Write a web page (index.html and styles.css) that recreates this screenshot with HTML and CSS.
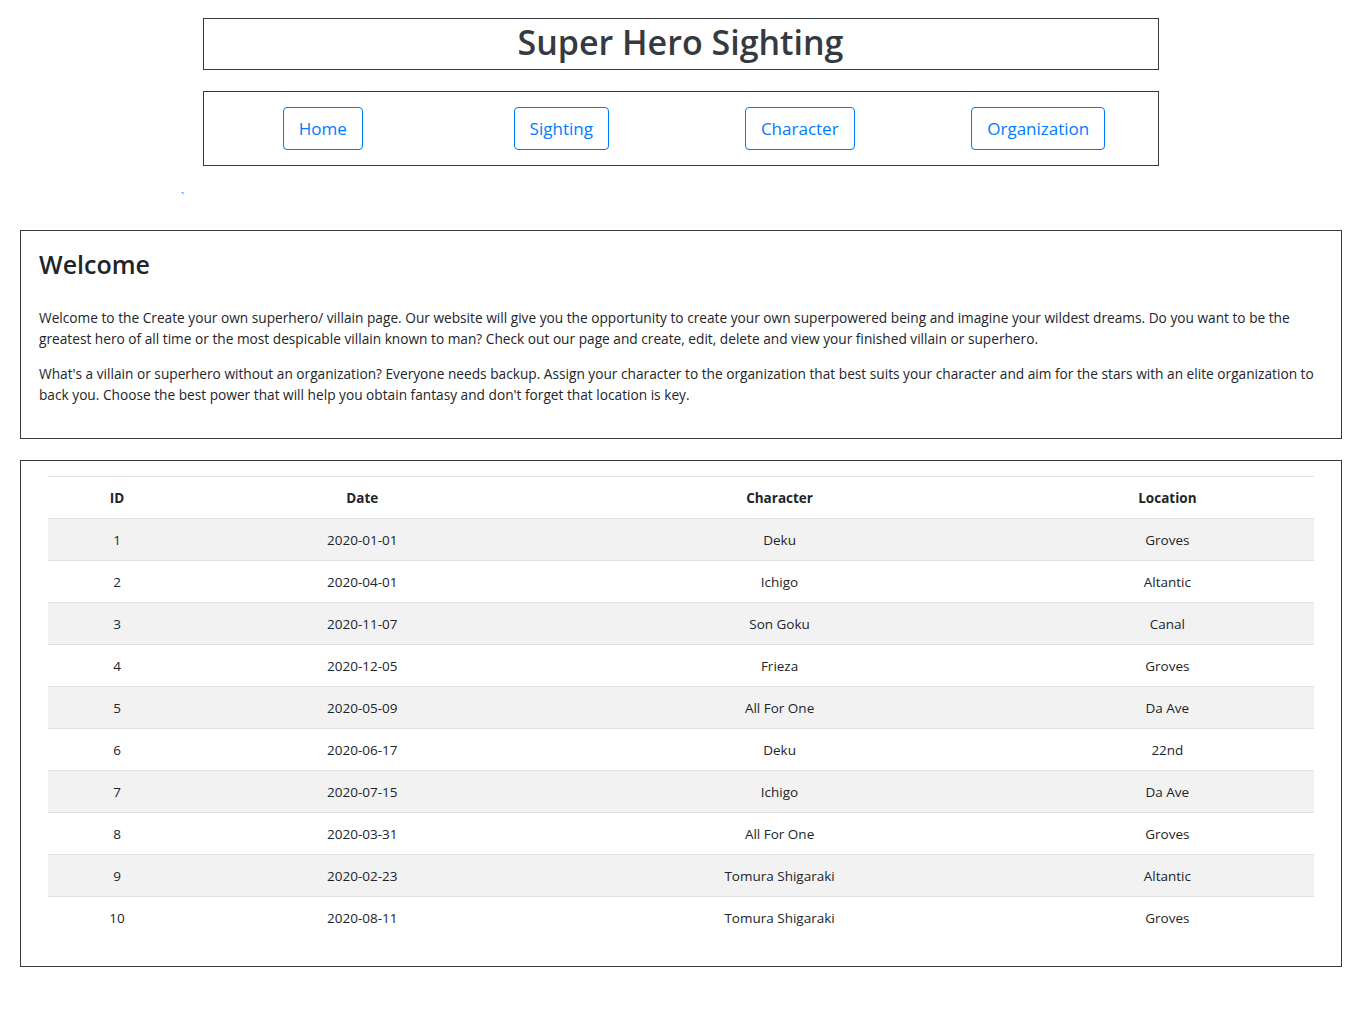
FILE: index.html
```html
<!DOCTYPE html>
<html lang="en">
<head>
<meta charset="utf-8">
<title>Super Hero Sighting</title>
<link rel="stylesheet" href="styles.css">
</head>
<body>
<div class="top">
  <div class="title-box"><h1 class="title">Super Hero Sighting</h1></div>
  <div class="nav-box">
    <div class="nav-cell"><a class="btn" href="#">Home</a></div>
    <div class="nav-cell"><a class="btn" href="#">Sighting</a></div>
    <div class="nav-cell"><a class="btn" href="#">Character</a></div>
    <div class="nav-cell"><a class="btn" href="#">Organization</a></div>
  </div>
</div>
<div class="tick"><a href="#">`</a></div>
<div class="panel welcome">
  <h2 class="welcome-title">Welcome</h2>
  <p>Welcome to the Create your own superhero/ villain page. Our website will give you the opportunity to create your own superpowered being and imagine your wildest dreams. Do you want to be the greatest hero of all time or the most despicable villain known to man? Check out our page and create, edit, delete and view your finished villain or superhero.</p>
  <p>What's a villain or superhero without an organization? Everyone needs backup. Assign your character to the organization that best suits your character and aim for the stars with an elite organization to back you. Choose the best power that will help you obtain fantasy and don't forget that location is key.</p>
</div>
<div class="panel table-panel">
  <table class="table">
    <colgroup><col class="c-id"><col class="c-date"><col class="c-char"><col class="c-loc"></colgroup>
    <thead>
      <tr><th>ID</th><th>Date</th><th>Character</th><th>Location</th></tr>
    </thead>
    <tbody>
      <tr><td>1</td><td>2020-01-01</td><td>Deku</td><td>Groves</td></tr>
      <tr><td>2</td><td>2020-04-01</td><td>Ichigo</td><td>Altantic</td></tr>
      <tr><td>3</td><td>2020-11-07</td><td>Son Goku</td><td>Canal</td></tr>
      <tr><td>4</td><td>2020-12-05</td><td>Frieza</td><td>Groves</td></tr>
      <tr><td>5</td><td>2020-05-09</td><td>All For One</td><td>Da Ave</td></tr>
      <tr><td>6</td><td>2020-06-17</td><td>Deku</td><td>22nd</td></tr>
      <tr><td>7</td><td>2020-07-15</td><td>Ichigo</td><td>Da Ave</td></tr>
      <tr><td>8</td><td>2020-03-31</td><td>All For One</td><td>Groves</td></tr>
      <tr><td>9</td><td>2020-02-23</td><td>Tomura Shigaraki</td><td>Altantic</td></tr>
      <tr><td>10</td><td>2020-08-11</td><td>Tomura Shigaraki</td><td>Groves</td></tr>
    </tbody>
  </table>
</div>
</body>
</html>
```
FILE: styles.css
```css
html { font-size: 14px; }
body {
  margin: 0;
  font-family: "Open Sans", "Noto Sans", sans-serif;
  font-size: 14px;
  line-height: 1.5;
  color: #212529;
  background: #fff;
}
.top {
  width: 956px;
  margin: 18px auto 0;
}
.title-box {
  border: 1px solid #343a40;
  height: 50px;
  display: flex;
  align-items: center;
  justify-content: center;
}
.title {
  margin: 0 0 4px;
  font-size: 34px;
  font-weight: 600;
  line-height: 1.2;
  color: #343a40;
}
.nav-box {
  margin-top: 21px;
  border: 1px solid #343a40;
  padding: 15px 0;
  display: grid;
  grid-template-columns: repeat(4, 1fr);
}
.nav-cell {
  display: flex;
  justify-content: center;
}
.btn {
  display: inline-block;
  box-sizing: border-box;
  height: 43px;
  padding: 0 15px;
  line-height: 41px;
  font-size: 17px;
  color: #007bff;
  text-decoration: none;
  border: 1px solid #007bff;
  border-radius: 4px;
}
.tick {
  height: 64px;
  padding-left: 181px;
  line-height: 21px;
  box-sizing: border-box;
  padding-top: 20px;
}
.tick a { color: #007bff; text-decoration: none; font-size: 12px; }
.panel {
  margin: 0 19px 0 20px;
  border: 1px solid #343a40;
}
.welcome {
  padding: 17px 18px 19px;
}
.welcome-title {
  margin: 0 0 25px;
  font-size: 25px;
  font-weight: 600;
  line-height: 1.35;
}
.welcome p {
  margin: 0 0 14px;
  font-size: 13.7px;
  line-height: 21px;
}
.table-panel {
  margin-top: 21px;
  padding: 15px 27px 28px;
}
.table {
  width: 100%;
  border-collapse: collapse;
  table-layout: fixed;
  font-size: 13.5px;
}
.c-id { width: 138px; }
.c-date { width: 352px; }
.c-char { width: 482px; }
.c-loc { width: 293px; }
.table th, .table td {
  border-top: 1px solid #dee2e6;
  padding: 11px 10px 9px;
  line-height: 21px;
  text-align: center;
  vertical-align: top;
}
.table th { font-weight: 700; }
.table tbody tr:nth-child(odd) { background: #f2f2f2; }
```
